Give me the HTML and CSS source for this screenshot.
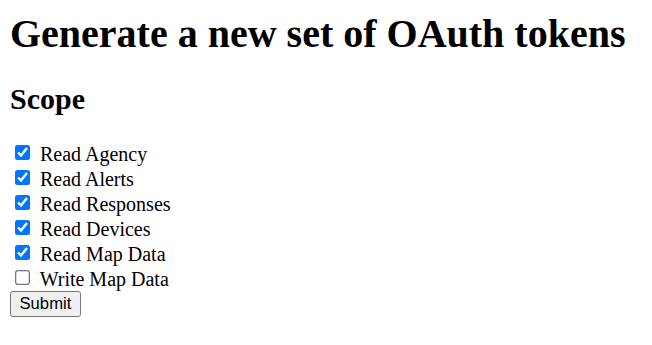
FILE: index.html
```html
<html>

<head>
    <link rel="stylesheet" href="styles.css">
</head>

<body>
    <h1>Generate a new set of OAuth tokens</h1>
    <h2>Scope</h2>
    <form>
        <div class="scope"><input type="checkbox" id="agency" checked> <label for="agency">Read Agency</label></div>
        <div class="scope"><input type="checkbox" id="alerts" checked> <label for="alerts">Read Alerts</label></div>
        <div class="scope"><input type="checkbox" id="responses" checked> <label for="responses">Read Responses</label></div>
        <div class="scope"><input type="checkbox" id="devices" checked> <label for="devices">Read Devices</label></div>
        <div class="scope"><input type="checkbox" id="map_read" checked> <label for="map_read">Read Map Data</label></div>
        <div class="scope"><input type="checkbox" id="map_write"> <label for="map_write">Write Map Data</label></div>
        <input type="submit" value="Submit">
    </form>
</body>

</html>
```

FILE: styles.css
```css
html {
    zoom: 1.25;
}

body {
    font-family: "Liberation Serif", serif;
}

h1 {
    margin-bottom: 20px;
}

input[type=submit] {
    font-family: "Liberation Sans", sans-serif;
}
```
